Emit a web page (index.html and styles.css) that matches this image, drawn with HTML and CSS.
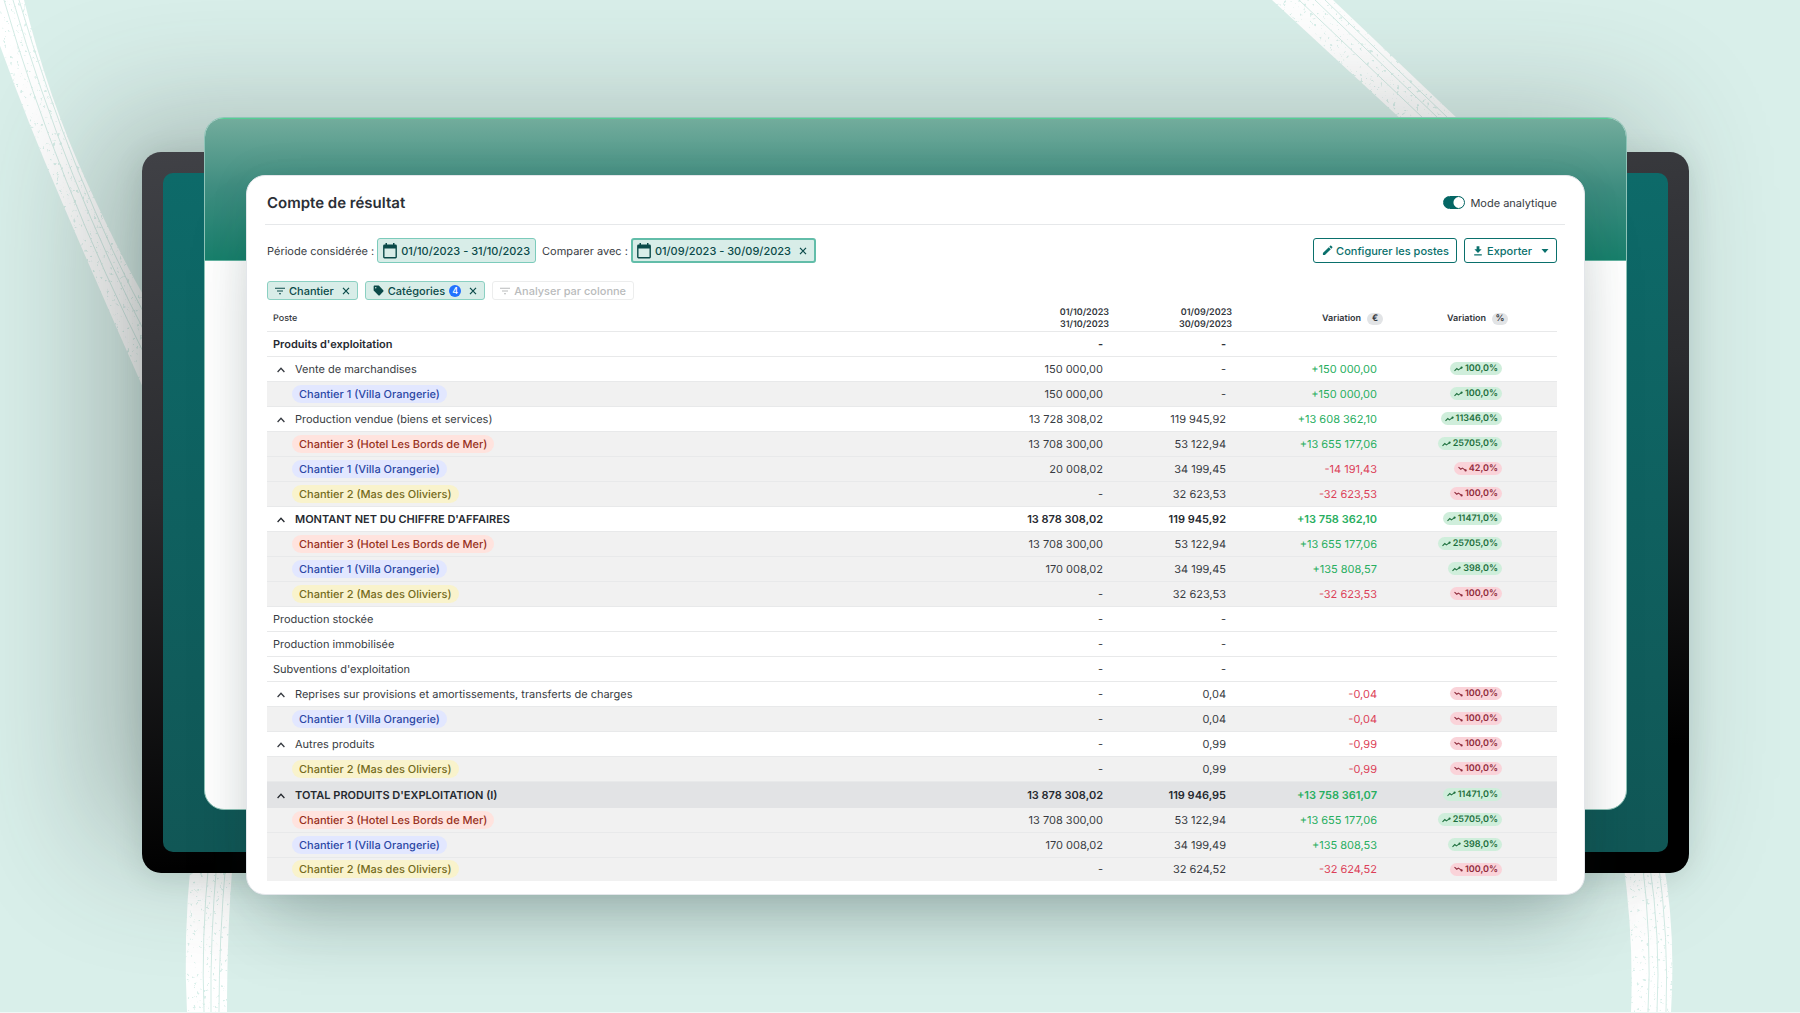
FILE: index.html
```html
<!DOCTYPE html>
<html lang="fr">
<head>
<meta charset="utf-8">
<meta name="viewport" content="width=device-width, initial-scale=1">
<title>Compte de résultat</title>
<link rel="stylesheet" href="styles.css">
</head>
<body>
<svg class="sprite" aria-hidden="true">
  <symbol id="i-cal" viewBox="0 0 14 16"><path fill="currentColor" d="M2.500 0h1.500v1.600h6V0h1.500v1.600h1a1.400 1.400 0 0 1 1.400 1.400v11a1.400 1.400 0 0 1-1.400 1.400h-11A1.400 1.400 0 0 1 .1 14V3a1.400 1.400 0 0 1 1.400-1.400h1zM1.500 5.500V14h11V5.500z"/></symbol>
  <symbol id="i-x" viewBox="0 0 8 8"><path fill="none" stroke="currentColor" stroke-width="1.200" d="M1 .8l6 6.400M7 .8L1 7.200"/></symbol>
  <symbol id="i-filter" viewBox="0 0 10 8"><path fill="none" stroke="currentColor" stroke-width="1.100" d="M0 1.200h10M2 4h6M4 6.800h2"/></symbol>
  <symbol id="i-tag" viewBox="0 0 12 12"><path fill="currentColor" fill-rule="evenodd" d="M1.600.6h4.200c.3 0 .6.100.800.300l4.600 4.700c.5.500.5 1.100 0 1.600l-3.800 3.900c-.5.500-1.100.5-1.600 0L1 6.400a1.200 1.200 0 0 1-.3-.8V1.700C.7 1 1 .6 1.600.6zM3 2.200a.8.8 0 1 0 0 1.600.8.8 0 0 0 0-1.600z"/></symbol>
  <symbol id="i-pen" viewBox="0 0 12 12"><path fill="currentColor" d="M1 8.800L7.400 2.400l2.200 2.200L3.200 11H1zM8 1.800l1-1c.3-.3.700-.3 1 0L11.200 2c.3.300.3.700 0 1l-1 1z"/></symbol>
  <symbol id="i-down" viewBox="0 0 10 10"><path fill="currentColor" d="M3.600.3h2.800v3h2.200L5 7 1.400 3.300h2.200zM1.200 8.200h7.600v1.300H1.200z"/></symbol>
  <symbol id="i-caret" viewBox="0 0 8 4"><path fill="currentColor" d="M.5 0h7L4 4z"/></symbol>
  <symbol id="i-chev" viewBox="0 0 8 6"><path fill="none" stroke="currentColor" stroke-width="1.300" d="M.6 5L4 1.300 7.400 5"/></symbol>
  <symbol id="i-up" viewBox="0 0 9 6"><path fill="none" stroke="currentColor" stroke-width="1.100" d="M.5 4.800L2.800 2.600l1.600 1.300L8 1.400"/><circle cx="7.600" cy="1.600" r="1.100" fill="currentColor"/></symbol>
  <symbol id="i-dn" viewBox="0 0 9 6"><path fill="none" stroke="currentColor" stroke-width="1.100" d="M.5 1.200L2.800 3.200l1.600-1.100L8 4.600"/><circle cx="7.600" cy="4.400" r="1.100" fill="currentColor"/></symbol>
</svg>
<div class="scene">
  <svg class="brush" viewBox="0 0 1800 1013" preserveAspectRatio="none" aria-hidden="true">
    <defs>
      <filter id="grain" x="0" y="0" width="1800" height="1013" filterUnits="userSpaceOnUse">
        <feTurbulence type="fractalNoise" baseFrequency="0.300" numOctaves="3" seed="4"/>
        <feColorMatrix values="0 0 0 0 1  0 0 0 0 1  0 0 0 0 1  0 0 0 -9 6.900"/>
        <feComposite in="SourceGraphic" operator="in"/>
      </filter>
    </defs>
    <g filter="url(#grain)" fill="#fff">
      <path d="M-16 0H24Q48 98 88 185T150 306V404Q104 300 61 200T-16 0z"/>
      <path d="M1272 0H1333L1460 121H1403z"/>
      <path d="M191 860H233Q227 930 227 1013H187Q183 940 191 860z"/>
      <path d="M1623 860H1663Q1676 930 1671 1013H1631Q1634 940 1623 860z"/>
    </g>
    <g class="brush-lines">
      <path d="M4 0Q56 180 150 366M13 0Q65 180 150 343M19 0Q72 180 150 325"/>
      <path d="M1299 0L1426 121M1315 0L1441 121M1325 0L1451 121"/>
      <path d="M209 860Q201 940 204 1013M217 860Q210 940 211 1013M226 860Q219 940 219 1013"/>
      <path d="M1642 860Q1652 940 1648 1013M1649 860Q1661 940 1657 1013M1658 860Q1669 940 1666 1013"/>
    </g>
  </svg>
  <div class="stack">
    <div class="tablet"><div class="tablet-screen"></div></div>
    <div class="window"><div class="window-bar"></div></div>
    <main class="card">
      <header class="card-head">
        <h1>Compte de résultat</h1>
        <label class="switch"><input type="checkbox" role="switch" checked>Mode analytique</label>
      </header>
      <div class="toolbar">
        <span class="label">Période considérée :</span>
        <button class="date" type="button"><svg class="cal"><use href="#i-cal"/></svg>01/10/2023 - 31/10/2023</button>
        <span class="label label-next">Comparer avec :</span>
        <button class="date date-on" type="button"><svg class="cal"><use href="#i-cal"/></svg>01/09/2023 - 30/09/2023<svg class="x"><use href="#i-x"/></svg></button>
        <div class="actions">
          <button class="btn" type="button"><svg class="pen"><use href="#i-pen"/></svg>Configurer les postes</button>
          <button class="btn btn-menu" type="button"><svg class="down"><use href="#i-down"/></svg>Exporter<svg class="caret"><use href="#i-caret"/></svg></button>
        </div>
      </div>
      <div class="chips">
        <button class="chip" type="button"><svg class="filter"><use href="#i-filter"/></svg>Chantier<svg class="x"><use href="#i-x"/></svg></button>
        <button class="chip" type="button"><svg class="tag"><use href="#i-tag"/></svg>Catégories<span class="count">4</span><svg class="x"><use href="#i-x"/></svg></button>
        <button class="chip chip-off" type="button"><svg class="filter"><use href="#i-filter"/></svg>Analyser par colonne</button>
      </div>
      <table>
        <colgroup><col><col class="c-num"><col class="c-num"><col class="c-var"><col class="c-pct"></colgroup>
        <thead>
          <tr><th scope="col">Poste</th><th scope="col">01/10/2023<br>31/10/2023</th><th scope="col">01/09/2023<br>30/09/2023</th><th scope="col">Variation<span class="unit">€</span></th><th scope="col">Variation<span class="unit">%</span></th></tr>
        </thead>
        <tbody>
          <tr class="strong"><th scope="row">Produits d'exploitation</th><td>-</td><td>-</td><td></td><td></td></tr>
          <tr><th scope="row"><button class="fold" type="button" aria-label="Replier"><svg><use href="#i-chev"/></svg></button>Vente de marchandises</th><td>150 000,00</td><td>-</td><td class="pos">+150 000,00</td><td><span class="badge up"><svg><use href="#i-up"/></svg>100,0%</span></td></tr>
          <tr class="sub"><th scope="row"><span class="pill blue">Chantier 1 (Villa Orangerie)</span></th><td>150 000,00</td><td>-</td><td class="pos">+150 000,00</td><td><span class="badge up"><svg><use href="#i-up"/></svg>100,0%</span></td></tr>
          <tr><th scope="row"><button class="fold" type="button" aria-label="Replier"><svg><use href="#i-chev"/></svg></button>Production vendue (biens et services)</th><td>13 728 308,02</td><td>119 945,92</td><td class="pos">+13 608 362,10</td><td><span class="badge up"><svg><use href="#i-up"/></svg>11346,0%</span></td></tr>
          <tr class="sub"><th scope="row"><span class="pill red">Chantier 3 (Hotel Les Bords de Mer)</span></th><td>13 708 300,00</td><td>53 122,94</td><td class="pos">+13 655 177,06</td><td><span class="badge up"><svg><use href="#i-up"/></svg>25705,0%</span></td></tr>
          <tr class="sub"><th scope="row"><span class="pill blue">Chantier 1 (Villa Orangerie)</span></th><td>20 008,02</td><td>34 199,45</td><td class="neg">-14 191,43</td><td><span class="badge dn"><svg><use href="#i-dn"/></svg>42,0%</span></td></tr>
          <tr class="sub"><th scope="row"><span class="pill yellow">Chantier 2 (Mas des Oliviers)</span></th><td>-</td><td>32 623,53</td><td class="neg">-32 623,53</td><td><span class="badge dn"><svg><use href="#i-dn"/></svg>100,0%</span></td></tr>
          <tr class="strong"><th scope="row"><button class="fold" type="button" aria-label="Replier"><svg><use href="#i-chev"/></svg></button>MONTANT NET DU CHIFFRE D'AFFAIRES</th><td>13 878 308,02</td><td>119 945,92</td><td class="pos">+13 758 362,10</td><td><span class="badge up"><svg><use href="#i-up"/></svg>11471,0%</span></td></tr>
          <tr class="sub"><th scope="row"><span class="pill red">Chantier 3 (Hotel Les Bords de Mer)</span></th><td>13 708 300,00</td><td>53 122,94</td><td class="pos">+13 655 177,06</td><td><span class="badge up"><svg><use href="#i-up"/></svg>25705,0%</span></td></tr>
          <tr class="sub"><th scope="row"><span class="pill blue">Chantier 1 (Villa Orangerie)</span></th><td>170 008,02</td><td>34 199,45</td><td class="pos">+135 808,57</td><td><span class="badge up"><svg><use href="#i-up"/></svg>398,0%</span></td></tr>
          <tr class="sub"><th scope="row"><span class="pill yellow">Chantier 2 (Mas des Oliviers)</span></th><td>-</td><td>32 623,53</td><td class="neg">-32 623,53</td><td><span class="badge dn"><svg><use href="#i-dn"/></svg>100,0%</span></td></tr>
          <tr><th scope="row">Production stockée</th><td>-</td><td>-</td><td></td><td></td></tr>
          <tr><th scope="row">Production immobilisée</th><td>-</td><td>-</td><td></td><td></td></tr>
          <tr><th scope="row">Subventions d'exploitation</th><td>-</td><td>-</td><td></td><td></td></tr>
          <tr><th scope="row"><button class="fold" type="button" aria-label="Replier"><svg><use href="#i-chev"/></svg></button>Reprises sur provisions et amortissements, transferts de charges</th><td>-</td><td>0,04</td><td class="neg">-0,04</td><td><span class="badge dn"><svg><use href="#i-dn"/></svg>100,0%</span></td></tr>
          <tr class="sub"><th scope="row"><span class="pill blue">Chantier 1 (Villa Orangerie)</span></th><td>-</td><td>0,04</td><td class="neg">-0,04</td><td><span class="badge dn"><svg><use href="#i-dn"/></svg>100,0%</span></td></tr>
          <tr><th scope="row"><button class="fold" type="button" aria-label="Replier"><svg><use href="#i-chev"/></svg></button>Autres produits</th><td>-</td><td>0,99</td><td class="neg">-0,99</td><td><span class="badge dn"><svg><use href="#i-dn"/></svg>100,0%</span></td></tr>
          <tr class="sub"><th scope="row"><span class="pill yellow">Chantier 2 (Mas des Oliviers)</span></th><td>-</td><td>0,99</td><td class="neg">-0,99</td><td><span class="badge dn"><svg><use href="#i-dn"/></svg>100,0%</span></td></tr>
          <tr class="strong total"><th scope="row"><button class="fold" type="button" aria-label="Replier"><svg><use href="#i-chev"/></svg></button>TOTAL PRODUITS D'EXPLOITATION (I)</th><td>13 878 308,02</td><td>119 946,95</td><td class="pos">+13 758 361,07</td><td><span class="badge up"><svg><use href="#i-up"/></svg>11471,0%</span></td></tr>
          <tr class="sub"><th scope="row"><span class="pill red">Chantier 3 (Hotel Les Bords de Mer)</span></th><td>13 708 300,00</td><td>53 122,94</td><td class="pos">+13 655 177,06</td><td><span class="badge up"><svg><use href="#i-up"/></svg>25705,0%</span></td></tr>
          <tr class="sub"><th scope="row"><span class="pill blue">Chantier 1 (Villa Orangerie)</span></th><td>170 008,02</td><td>34 199,49</td><td class="pos">+135 808,53</td><td><span class="badge up"><svg><use href="#i-up"/></svg>398,0%</span></td></tr>
          <tr class="sub last"><th scope="row"><span class="pill yellow">Chantier 2 (Mas des Oliviers)</span></th><td>-</td><td>32 624,52</td><td class="neg">-32 624,52</td><td><span class="badge dn"><svg><use href="#i-dn"/></svg>100,0%</span></td></tr>
        </tbody>
      </table>
    </main>
  </div>
</div>
</body>
</html>
```
FILE: styles.css
```css
* { box-sizing: border-box; }
body {
  margin: 0;
  font: 400 11px/14px Inter, "Liberation Sans", sans-serif;
  text-rendering: geometricPrecision;
  color: #373b42;
  background: #d9efea;
}
button { font: inherit; color: inherit; margin: 0; padding: 0; border: 0; background: none; white-space: nowrap; cursor: pointer; }
svg { display: block; flex: none; }
.sprite { position: absolute; width: 0; height: 0; }

.scene {
  position: relative;
  min-height: 100vh;
  overflow: hidden;
  padding: 175px 215px 117px 246px;
  border-bottom: 1px solid #eff8f6;
}
.brush { position: absolute; inset: 0; width: 100%; height: 100%; }
.brush-lines { fill: none; stroke: #d3ebe5; stroke-width: 1; }
.stack { position: relative; }

/* Decorative layers behind the card */
.tablet {
  position: absolute;
  inset: -23px -104px 22px;
  padding: 21px;
  border-radius: 19px;
  background: linear-gradient(175deg, #404146, #2a2b2e 40%, #000 85%);
  box-shadow: -45px -30px 130px rgba(50, 60, 55, .32), 0 4px 30px rgba(20, 50, 45, .12);
}
.tablet-screen {
  height: 100%;
  border-radius: 10px;
  background: linear-gradient(#0d6a69, #115756);
}
.window {
  position: absolute;
  inset: -58px -42px 85px;
  overflow: hidden;
  border: 1px solid #8fc4b8;
  border-radius: 20px;
  background: #fff;
}
.window-bar {
  height: 143px;
  border: solid #55cf93;
  border-width: 1px 0;
  border-bottom-color: #63b3a1;
  background: linear-gradient(#72ac9c, #3f8d80 48%, #18806c);
}
.card {
  position: relative;
  padding: 0 21px 13px 20px;
  border: 1px solid #e3e6ea;
  border-radius: 19px;
  background: #fff;
  box-shadow: 0 40px 70px -20px rgba(20, 50, 45, .26), 0 0 40px rgba(20, 50, 45, .08);
}

/* Heading */
.card-head {
  display: flex;
  align-items: center;
  justify-content: space-between;
  height: 49px;
  margin: 0 -2px;
  padding: 5px 8px 0 2px;
  border-bottom: 1px solid #e6e8ea;
}
h1 { margin: 0; font-size: 15px; line-height: 20px; font-weight: 600; color: #2b2f36; }
.switch { display: flex; align-items: center; gap: 5px; }
.switch input {
  appearance: none;
  width: 22px;
  height: 13px;
  margin: 0;
  border: 1px solid #046664;
  border-radius: 7px;
  background: radial-gradient(circle at 15px 50%, #fff 5px, #046664 6px);
}

/* Toolbar */
.toolbar { display: flex; align-items: center; margin: 13px 6px 0 0; }
.label-next { margin-left: 6px; }
.date {
  display: flex;
  align-items: center;
  height: 25px;
  margin-left: 3px;
  padding: 0 5px;
  gap: 4px;
  border: 1px solid #7ccbbb;
  border-radius: 3px;
  background: #d8ede8;
  color: #0b4a49;
  font-weight: 500;
}
.date-on { border: 2px solid #62bda9; padding: 0 7px 0 4px; }
.cal { width: 14px; height: 16px; }
.x { width: 8px; height: 8px; margin-left: 4px; }
.actions { display: flex; gap: 7px; margin-left: auto; }
.btn {
  display: flex;
  align-items: center;
  gap: 3px;
  height: 25px;
  padding: 0 7px 0 8px;
  border: 1px solid #0a706c;
  border-radius: 3px;
  background: #fff;
  color: #0a706c;
  font-weight: 500;
}
.btn-menu { gap: 4px; }
.pen { width: 11px; height: 11px; }
.down { width: 10px; height: 10px; }
.caret { width: 8px; height: 4px; margin-left: 5px; }

/* Analysis chips */
.chips { display: flex; gap: 7px; margin-top: 18px; }
.chip {
  display: flex;
  align-items: center;
  gap: 4px;
  height: 19px;
  padding: 0 7px;
  border: 1px solid #8bd0c2;
  border-radius: 3px;
  background: #d8ede8;
  color: #0b4a49;
  font-weight: 500;
}
.chip-off { border-color: #eceded; background: #fff; color: #b9bbbc; }
.filter { width: 10px; height: 8px; }
.tag { width: 11px; height: 11px; }
.count { width: 12px; height: 12px; border-radius: 50%; background: #2271ff; color: #fff; font-size: 9px; line-height: 12px; text-align: center; }

/* Accounts table */
table { width: calc(100% - 6px); margin-top: 3px; table-layout: fixed; border-collapse: collapse; }
.c-num { width: 123px; }
.c-var { width: 151px; }
.c-pct { width: 174px; }
th, td { height: 25px; padding: 0 6px; border-bottom: 1px solid #e8e9ea; white-space: nowrap; text-align: right; font-weight: 400; }
th:first-child { text-align: left; }
thead th { height: 28px; padding: 4px 0 0; font-size: 9px; line-height: 12px; font-weight: 600; color: #33373d; }
thead th:first-child { padding-left: 6px; font-weight: 500; }
thead th:last-child { padding-right: 49px; }
td:last-child { padding: 0 55px 2px 0; }
.unit { display: inline-block; width: 16px; height: 12px; margin-left: 6px; border-radius: 6px; background: #e2e4e6; line-height: 12px; text-align: center; }
.strong th, .strong td { font-weight: 600; color: #25292f; }
.sub th, .sub td { background: #f1f1f1; }
.total th, .total td { height: 26px; background: #e2e3e5; border-color: #e2e3e5; }
.last th, .last td { height: 23px; border-bottom: 0; }
tr .pos { color: #27ae60; }
tr .neg { color: #dc3f58; }
.fold { display: inline-block; width: 22px; padding-left: 4px; vertical-align: middle; }
.fold svg { width: 8px; height: 6px; }
.pill { display: inline-block; height: 18px; margin-left: 19px; padding: 0 7px; border-radius: 9px; line-height: 18px; font-weight: 500; vertical-align: middle; }
.blue { background: #e2e7ff; color: #2c47a5; }
.red { background: #ffe3de; color: #97301c; }
.yellow { background: #f9f3cc; color: #746a20; }
.badge { display: inline-flex; align-items: center; gap: 2px; height: 13px; padding: 0 4px; border-radius: 7px; font-size: 9px; font-weight: 600; line-height: 13px; vertical-align: middle; }
.badge svg { width: 9px; height: 6px; }
.up { background: #cfeedb; color: #1e6f3d; }
.dn { background: #fad3d9; color: #8f2b3b; }
```
